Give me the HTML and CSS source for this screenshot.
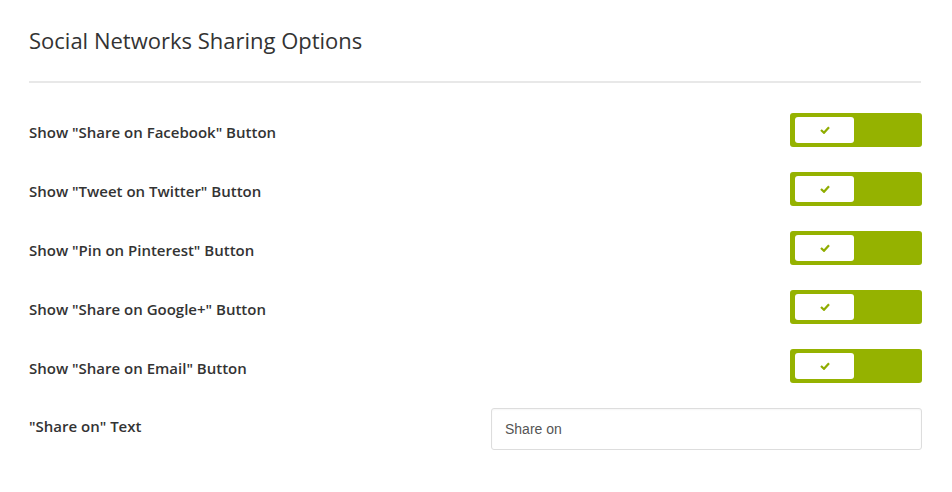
FILE: index.html
```html
<!DOCTYPE html>
<html>
<head>
<meta charset="utf-8">
<link rel="stylesheet" href="styles.css">
</head>
<body>
<div class="panel">
  <h2 class="title">Social Networks Sharing Options</h2>
  <div class="rows">
    <div class="row">
      <span class="label">Show "Share on Facebook" Button</span>
      <div class="toggle"><div class="knob"><svg width="10" height="8" viewBox="0 0 10 8"><path d="M1 4 L4 6.8 L9 1.2" fill="none" stroke="#8fac00" stroke-width="2.2"/></svg></div></div>
    </div>
    <div class="row">
      <span class="label">Show "Tweet on Twitter" Button</span>
      <div class="toggle"><div class="knob"><svg width="10" height="8" viewBox="0 0 10 8"><path d="M1 4 L4 6.8 L9 1.2" fill="none" stroke="#8fac00" stroke-width="2.2"/></svg></div></div>
    </div>
    <div class="row">
      <span class="label">Show "Pin on Pinterest" Button</span>
      <div class="toggle"><div class="knob"><svg width="10" height="8" viewBox="0 0 10 8"><path d="M1 4 L4 6.8 L9 1.2" fill="none" stroke="#8fac00" stroke-width="2.2"/></svg></div></div>
    </div>
    <div class="row">
      <span class="label">Show "Share on Google+" Button</span>
      <div class="toggle"><div class="knob"><svg width="10" height="8" viewBox="0 0 10 8"><path d="M1 4 L4 6.8 L9 1.2" fill="none" stroke="#8fac00" stroke-width="2.2"/></svg></div></div>
    </div>
    <div class="row">
      <span class="label">Show "Share on Email" Button</span>
      <div class="toggle"><div class="knob"><svg width="10" height="8" viewBox="0 0 10 8"><path d="M1 4 L4 6.8 L9 1.2" fill="none" stroke="#8fac00" stroke-width="2.2"/></svg></div></div>
    </div>
    <div class="row">
      <span class="label label-input">"Share on" Text</span>
      <input class="text-input" type="text" value="Share on">
    </div>
  </div>
</div>
</body>
</html>
```
FILE: styles.css
```css
html, body {
  margin: 0;
  padding: 0;
  background: #ffffff;
}
.panel {
  width: 893px;
  margin-left: 29px;
  padding-top: 25px;
  font-family: "Open Sans", sans-serif;
  color: #333333;
}
.title {
  margin: 0;
  font-size: 22px;
  font-weight: 400;
  line-height: 30px;
  padding-bottom: 26px;
  border-bottom: 2px solid #e8e8e8;
  color: #333333;
  width: 892px;
}
.rows {
  display: flex;
  flex-direction: column;
  gap: 25px;
  margin-top: 30px;
}
.row {
  display: flex;
  align-items: center;
  justify-content: space-between;
}
.label {
  font-size: 15px;
  font-weight: 600;
  color: #333333;
  position: relative;
  top: 2px;
}
.label-input {
  top: -3px;
}
.toggle {
  width: 132px;
  height: 34px;
  background: #95b200;
  border-radius: 3px;
  display: flex;
  align-items: center;
  padding-left: 5px;
  box-sizing: border-box;
}
.knob {
  width: 59px;
  height: 26px;
  background: #ffffff;
  border-radius: 3px;
  display: flex;
  align-items: center;
  justify-content: center;
}
.text-input {
  width: 431px;
  height: 42px;
  box-sizing: border-box;
  border: 1px solid #dddddd;
  border-radius: 3px;
  padding: 0 13px;
  font-family: "Liberation Sans", Arial, sans-serif;
  font-size: 14px;
  color: #555555;
  background: #ffffff;
  box-shadow: inset 0 1px 2px rgba(0,0,0,0.04);
  outline: none;
}
```
